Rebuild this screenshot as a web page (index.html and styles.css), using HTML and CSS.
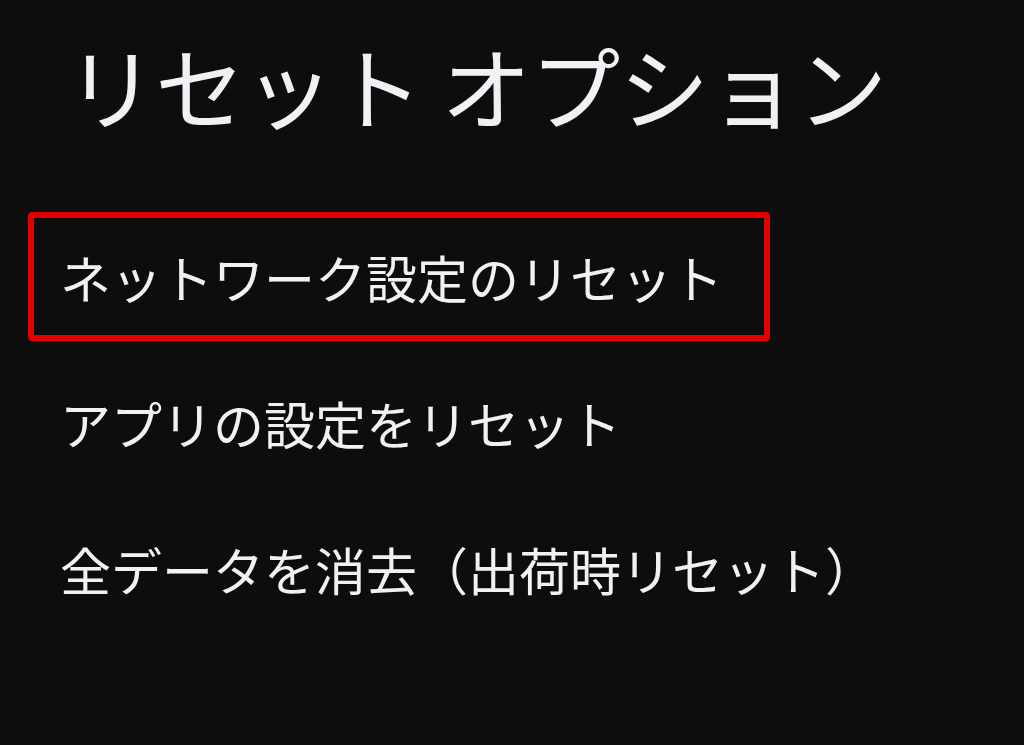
FILE: index.html
```html
<!DOCTYPE html>
<html lang="ja">
<head>
  <meta charset="UTF-8">
  <title>リセット オプション</title>
  <link rel="stylesheet" href="styles.css">
</head>
<body>
  <h1 class="title">リセット オプション</h1>

  <ul class="options">
    <li class="option selected">ネットワーク設定のリセット</li>
    <li class="option">アプリの設定をリセット</li>
    <li class="option">全データを消去（出荷時リセット）</li>
  </ul>
</body>
</html>
```

FILE: styles.css
```css
body {
  margin: 0;
  background: #0d0d0d;
  color: #f1f0f5;
  font-family: "Noto Sans CJK JP", "Noto Sans", sans-serif;
  height: 745px;
  overflow: hidden;
}

.title {
  margin: 0;
  padding: 20px 0 0 66px;
  font-size: 90px;
  font-weight: 400;
  line-height: 128px;
  letter-spacing: -1px;
  white-space: nowrap;
}

.options {
  list-style: none;
  margin: 64px 0 0 28px;
  padding: 0;
  display: flex;
  flex-direction: column;
  gap: 17px;
}

.option {
  box-sizing: border-box;
  width: 742px;
  height: 129px;
  display: flex;
  align-items: center;
  padding: 0 26px;
  border: 6px solid transparent;
  border-radius: 4px;
  font-size: 51px;
  font-weight: 400;
  white-space: nowrap;
}

.option.selected {
  border-color: #e10000;
}
```
